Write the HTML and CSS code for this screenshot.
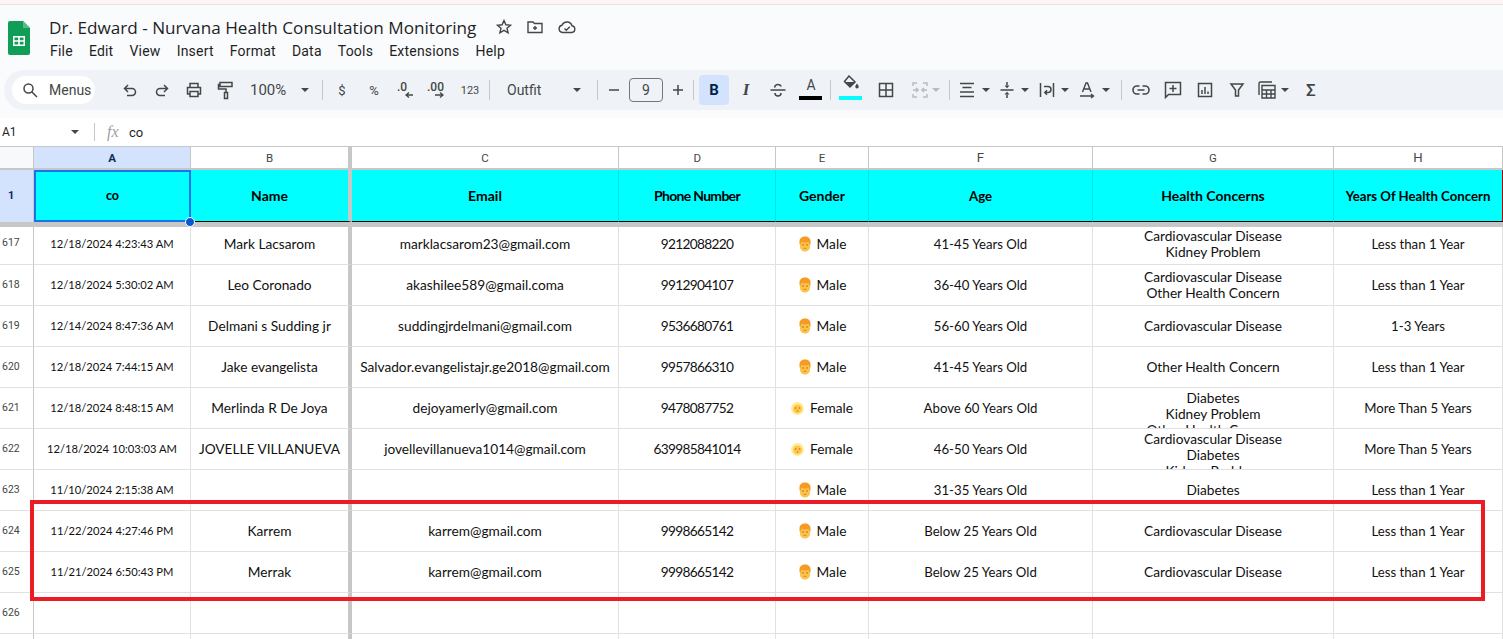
FILE: index.html
```html
<!DOCTYPE html>
<html lang="en">
<head>
  <meta charset="UTF-8" />
  <title>Dr. Edward - Nurvana Health Consultation Monitoring</title>
  <link rel="stylesheet" href="styles.css">
</head>
<body>

<svg class="sprite" width="0" height="0">
  <symbol id="male" viewBox="0 0 14 16">
    <path d="M2 6h10v5c0 2.500-2.500 4.500-5 4.500S2 13.500 2 11z" fill="#fdc34a"/>
    <path d="M1.500 8.500V5C1.500 2.500 4 .5 7 .5s5.500 2 5.500 4.500v3.500l-1.300-.3-.4-2.200c-2 .6-5.600.6-7.600 0l-.4 2.200z" fill="#f59a23"/>
    <circle cx="5" cy="9" r=".8" fill="#a8651f"/><circle cx="9" cy="9" r=".8" fill="#a8651f"/>
    <path d="M5.500 12.300h3" stroke="#d0801f" stroke-width=".9"/>
  </symbol>
  <symbol id="female" viewBox="0 0 14 14">
    <circle cx="7" cy="7" r="7" fill="#ffeb99"/>
    <circle cx="7" cy="7.500" r="4.800" fill="#fcc94a"/>
    <circle cx="5" cy="6.500" r="1" fill="#dc8a35"/><circle cx="9" cy="6.500" r="1" fill="#dc8a35"/>
    <circle cx="7" cy="9.500" r="1" fill="#dc8a35"/>
  </symbol>
</svg>

<!-- Title and menus -->
<header class="title-bar">
  <svg class="logo" width="22" height="34" viewBox="0 0 22 34">
    <path d="M2 0h13l7 7v25a2 2 0 0 1-2 2H2a2 2 0 0 1-2-2V2a2 2 0 0 1 2-2z" fill="#0f9d58"/>
    <path d="M15 0l7 7h-7z" fill="#57bb8a"/>
    <path d="M5 15h12v10H5zM6.500 16.500v2.700h3.700v-2.700zm5.300 0v2.700h3.700v-2.700zM6.500 20.700v2.800h3.700v-2.800zm5.300 0v2.800h3.700v-2.800z" fill="#fff" fill-rule="evenodd"/>
  </svg>
  <div class="title-text">
    <div class="doc-row">
      <span class="doc-name">Dr. Edward - Nurvana Health Consultation Monitoring</span>
      <svg class="doc-icon" width="18" height="18" viewBox="0 0 18 18" fill="none" stroke="#444746" stroke-width="1.400"><path d="M9 2.500l1.900 4.300 4.600.4-3.500 3 1.100 4.600L9 12.400l-4.100 2.400L6 10.200l-3.500-3 4.600-.4z"/></svg>
      <svg class="doc-icon" width="18" height="18" viewBox="0 0 18 18" fill="none" stroke="#444746" stroke-width="1.400"><path d="M2 4h5l1.500 1.500H16v9H2zM9 8v4M7 10h4"/></svg>
      <svg class="doc-icon" width="20" height="18" viewBox="0 0 20 18" fill="none" stroke="#444746" stroke-width="1.400"><path d="M5.500 14.500a3.700 3.700 0 0 1-.5-7.300 5.300 5.300 0 0 1 10 .6 3.400 3.400 0 0 1 0 6.700zM7.500 10.500l1.800 1.800 3.500-3.500"/></svg>
    </div>
    <nav class="menu-row">
      <span class="menu-item">File</span>
      <span class="menu-item">Edit</span>
      <span class="menu-item">View</span>
      <span class="menu-item">Insert</span>
      <span class="menu-item">Format</span>
      <span class="menu-item">Data</span>
      <span class="menu-item">Tools</span>
      <span class="menu-item">Extensions</span>
      <span class="menu-item">Help</span>
    </nav>
  </div>
</header>

<!-- Toolbar -->
<div class="toolbar">
  <div class="search-pill">
    <svg width="16" height="16" viewBox="0 0 16 16" fill="none" stroke="#444746" stroke-width="1.500"><circle cx="6.500" cy="6.500" r="4.500"/><path d="M10 10l5 5"/></svg>
    <span>Menus</span>
  </div>
  <div class="tool first-tool"><svg width="18" height="18" viewBox="0 0 18 18" fill="none" stroke="#444746" stroke-width="1.500"><path d="M7 4L3.500 7.500 7 11M3.500 7.500H11a3.500 3.500 0 0 1 0 7H6"/></svg></div>
  <div class="tool"><svg width="18" height="18" viewBox="0 0 18 18" fill="none" stroke="#444746" stroke-width="1.500"><path d="M11 4l3.500 3.500L11 11M14.500 7.500H7a3.500 3.500 0 0 0 0 7h5"/></svg></div>
  <div class="tool"><svg width="18" height="18" viewBox="0 0 18 18" fill="none" stroke="#444746" stroke-width="1.500"><path d="M5 6V2.500h8V6M5 13H2.500V6.500h13V13H13M5 10.500h8v5H5z"/></svg></div>
  <div class="tool"><svg width="18" height="20" viewBox="0 0 18 20" fill="none" stroke="#444746" stroke-width="1.500"><path d="M3 2.500h12v4H3zM3 4.500H1.500v4.500H9v3M7.500 12.500h3v6h-3z"/></svg></div>
  <div class="tool-zoom"><span>100%</span><i class="caret"></i></div>
  <i class="sep sep-zoom"></i>
  <div class="tool tool-text">$</div>
  <div class="tool tool-text">%</div>
  <div class="tool"><svg width="22" height="20" viewBox="0 0 22 20"><text x="2" y="11" class="dec-text">.0</text><path d="M18 15H11M14 12.500L11 15l3 2.500" fill="none" stroke="#444746" stroke-width="1.300"/></svg></div>
  <div class="tool"><svg width="24" height="20" viewBox="0 0 24 20"><text x="1" y="11" class="dec-text">.00</text><path d="M9 15h8M14 12.500l3 2.500-3 2.500" fill="none" stroke="#444746" stroke-width="1.300"/></svg></div>
  <div class="tool tool-small">123</div>
  <i class="sep sep-tight"></i>
  <div class="tool-font"><span>Outfit</span><i class="caret"></i></div>
  <i class="sep sep-font"></i>
  <div class="tool-step">
    <svg width="12" height="12" viewBox="0 0 12 12"><path d="M1 6h10" stroke="#444746" stroke-width="1.500"/></svg>
  </div>
  <div class="size-box">9</div>
  <div class="tool-step">
    <svg width="12" height="12" viewBox="0 0 12 12"><path d="M1 6h10M6 1v10" stroke="#444746" stroke-width="1.500"/></svg>
  </div>
  <i class="sep sep-tight"></i>
  <div class="tool-bold">B</div>
  <div class="tool tool-italic">I</div>
  <div class="tool"><svg width="18" height="18" viewBox="0 0 18 18" fill="none" stroke="#444746" stroke-width="1.500"><path d="M1.500 9h15M5.500 6.500C6 4 8 3.500 9 3.500s2.500.5 3.300 2M6 12c0 2 1.500 3 3 3s3-1 3-3"/></svg></div>
  <div class="tool tool-color">
    <span class="color-letter">A</span>
    <i class="color-bar color-black"></i>
  </div>
  <i class="sep sep-tight"></i>
  <div class="tool tool-color">
    <svg width="20" height="16" viewBox="0 0 20 16"><path d="M8 1l6 6-5 5-5.500-5.500z" fill="none" stroke="#444746" stroke-width="1.500"/><path d="M3.500 7h10.300L9 12z" fill="#444746"/><path d="M16 8.500c1 1.500 1.700 2.300 1.700 3.300a1.700 1.700 0 0 1-3.400 0c0-1 .7-1.800 1.700-3.300z" fill="#444746"/></svg>
    <i class="color-bar color-cyan"></i>
  </div>
  <div class="tool tool-gap"><svg width="16" height="16" viewBox="0 0 16 16" fill="none" stroke="#444746" stroke-width="1.500"><path d="M1.500 1.500h13v13h-13zM8 1.500v13M1.500 8h13"/></svg></div>
  <div class="tool-merge">
    <svg width="18" height="18" viewBox="0 0 18 18" fill="none" stroke="#b9bcbf" stroke-width="1.500"><path d="M6 2H2v3M12 2h4v3M6 16H2v-3M12 16h4v-3M2 9h5M16 9h-5M5 7l2 2-2 2M13 7l-2 2 2 2"/></svg>
    <i class="caret caret-off"></i>
  </div>
  <i class="sep sep-merge"></i>
  <div class="tool-drop">
    <svg width="18" height="16" viewBox="0 0 18 16" fill="none" stroke="#444746" stroke-width="1.500"><path d="M2 1.500h14M4.500 5.500h9M2 10h14M2 14.500h14"/></svg>
    <i class="caret"></i>
  </div>
  <div class="tool-drop">
    <svg width="16" height="18" viewBox="0 0 16 18" fill="none" stroke="#444746" stroke-width="1.500"><path d="M1.500 9h13"/><path d="M8 1v3.500M8 13.500V17" /><path d="M5.500 4.500h5L8 7.200zM5.500 13.500h5L8 10.800z" fill="#444746" stroke="none"/></svg>
    <i class="caret"></i>
  </div>
  <div class="tool-drop">
    <svg width="16" height="16" viewBox="0 0 16 16" fill="none" stroke="#444746" stroke-width="1.500"><path d="M1.500 1v14M14.500 1v14M5 4.500h4a3 3 0 0 1 0 6H6M8 8.300l-2.200 2.200 2.200 2.200"/></svg>
    <i class="caret"></i>
  </div>
  <div class="tool-drop">
    <svg width="18" height="18" viewBox="0 0 18 18" fill="none" stroke="#444746" stroke-width="1.400"><path d="M4.500 11L8 2h1.500l3.500 9M5.800 8h6M2 15h13M13 13l2.500 2-2.500 2"/></svg>
    <i class="caret"></i>
  </div>
  <i class="sep sep-rotate"></i>
  <div class="tool"><svg width="18" height="12" viewBox="0 0 18 12" fill="none" stroke="#444746" stroke-width="1.600"><path d="M7.500 2H5a4 4 0 0 0 0 8h2.500M10.500 2H13a4 4 0 0 1 0 8h-2.500M5.500 6h7"/></svg></div>
  <div class="tool"><svg width="18" height="18" viewBox="0 0 18 18" fill="none" stroke="#444746" stroke-width="1.500"><path d="M1.500 1.500h15v12h-12l-3 3zM9 4v7M5.500 7.500h7"/></svg></div>
  <div class="tool"><svg width="16" height="16" viewBox="0 0 16 16" fill="none" stroke="#444746" stroke-width="1.500"><path d="M1.500 1.500h13v13h-13zM5 8v4M8 5v7M11 9.500V12"/></svg></div>
  <div class="tool"><svg width="16" height="16" viewBox="0 0 16 16" fill="none" stroke="#444746" stroke-width="1.500"><path d="M2 2h12L9.500 8v6h-3V8z"/></svg></div>
  <div class="tool-func">
    <svg width="18" height="18" viewBox="0 0 18 18" fill="none" stroke="#444746" stroke-width="1.400"><path d="M1 14V2.500a1.500 1.500 0 0 1 1.500-1.500H14M4 4.500h13v12.500H4zM4 9h13M4 13h13M8.500 9v8M13 9v8" /></svg>
    <i class="caret"></i>
  </div>
  <div class="tool-sigma">Σ</div>
</div>

<!-- Formula bar -->
<div class="formula-bar">
  <div class="name-box"><span>A1</span><i class="caret"></i></div>
  <i class="formula-sep"></i>
  <span class="fx">fx</span>
  <span class="formula-value">co</span>
</div>

<!-- Sheet -->
<main class="sheet">
  <div class="row col-heads">
    <div class="cell corner"></div>
    <div class="cell head head-active">A</div>
    <div class="cell head frozen">B</div>
    <div class="cell head">C</div>
    <div class="cell head">D</div>
    <div class="cell head">E</div>
    <div class="cell head">F</div>
    <div class="cell head">G</div>
    <div class="cell head">H</div>
  </div>

  <div class="row row-header">
    <div class="cell num num-active">1</div>
    <div class="cell selected">co</div>
    <div class="cell frozen">Name</div>
    <div class="cell">Email</div>
    <div class="cell">Phone Number</div>
    <div class="cell">Gender</div>
    <div class="cell">Age</div>
    <div class="cell">Health Concerns</div>
    <div class="cell cell-last">Years Of Health Concern</div>
    <i class="fill-handle"></i>
  </div>

  <div class="row row-first">
    <div class="cell num">617</div>
    <div class="cell date">12/18/2024 4:23:43 AM</div>
    <div class="cell frozen">Mark Lacsarom</div>
    <div class="cell">marklacsarom23@gmail.com</div>
    <div class="cell">9212088220</div>
    <div class="cell"><svg class="face"><use href="#male"/></svg>Male</div>
    <div class="cell">41-45 Years Old</div>
    <div class="cell">Cardiovascular Disease<br>Kidney Problem</div>
    <div class="cell">Less than 1 Year</div>
  </div>
  <div class="row">
    <div class="cell num">618</div>
    <div class="cell date">12/18/2024 5:30:02 AM</div>
    <div class="cell frozen">Leo Coronado</div>
    <div class="cell">akashilee589@gmail.coma</div>
    <div class="cell">9912904107</div>
    <div class="cell"><svg class="face"><use href="#male"/></svg>Male</div>
    <div class="cell">36-40 Years Old</div>
    <div class="cell">Cardiovascular Disease<br>Other Health Concern</div>
    <div class="cell">Less than 1 Year</div>
  </div>
  <div class="row">
    <div class="cell num">619</div>
    <div class="cell date">12/14/2024 8:47:36 AM</div>
    <div class="cell frozen">Delmani s Sudding jr</div>
    <div class="cell">suddingjrdelmani@gmail.com</div>
    <div class="cell">9536680761</div>
    <div class="cell"><svg class="face"><use href="#male"/></svg>Male</div>
    <div class="cell">56-60 Years Old</div>
    <div class="cell">Cardiovascular Disease</div>
    <div class="cell">1-3 Years</div>
  </div>
  <div class="row">
    <div class="cell num">620</div>
    <div class="cell date">12/18/2024 7:44:15 AM</div>
    <div class="cell frozen">Jake evangelista</div>
    <div class="cell">Salvador.evangelistajr.ge2018@gmail.com</div>
    <div class="cell">9957866310</div>
    <div class="cell"><svg class="face"><use href="#male"/></svg>Male</div>
    <div class="cell">41-45 Years Old</div>
    <div class="cell">Other Health Concern</div>
    <div class="cell">Less than 1 Year</div>
  </div>
  <div class="row">
    <div class="cell num">621</div>
    <div class="cell date">12/18/2024 8:48:15 AM</div>
    <div class="cell frozen">Merlinda R De Joya</div>
    <div class="cell">dejoyamerly@gmail.com</div>
    <div class="cell">9478087752</div>
    <div class="cell"><svg class="face face-f"><use href="#female"/></svg>Female</div>
    <div class="cell">Above 60 Years Old</div>
    <div class="cell cell-clip">Diabetes<br>Kidney Problem<br>Other Health Concern</div>
    <div class="cell">More Than 5 Years</div>
  </div>
  <div class="row">
    <div class="cell num">622</div>
    <div class="cell date">12/18/2024 10:03:03 AM</div>
    <div class="cell frozen">JOVELLE VILLANUEVA</div>
    <div class="cell">jovellevillanueva1014@gmail.com</div>
    <div class="cell">639985841014</div>
    <div class="cell"><svg class="face face-f"><use href="#female"/></svg>Female</div>
    <div class="cell">46-50 Years Old</div>
    <div class="cell cell-clip">Cardiovascular Disease<br>Diabetes<br>Kidney Problem</div>
    <div class="cell">More Than 5 Years</div>
  </div>
  <div class="row">
    <div class="cell num">623</div>
    <div class="cell date">11/10/2024 2:15:38 AM</div>
    <div class="cell frozen"></div>
    <div class="cell"></div>
    <div class="cell"></div>
    <div class="cell"><svg class="face"><use href="#male"/></svg>Male</div>
    <div class="cell">31-35 Years Old</div>
    <div class="cell">Diabetes</div>
    <div class="cell">Less than 1 Year</div>
  </div>
  <div class="row">
    <div class="cell num">624</div>
    <div class="cell date">11/22/2024 4:27:46 PM</div>
    <div class="cell frozen">Karrem</div>
    <div class="cell">karrem@gmail.com</div>
    <div class="cell">9998665142</div>
    <div class="cell"><svg class="face"><use href="#male"/></svg>Male</div>
    <div class="cell">Below 25 Years Old</div>
    <div class="cell">Cardiovascular Disease</div>
    <div class="cell">Less than 1 Year</div>
  </div>
  <div class="row">
    <div class="cell num">625</div>
    <div class="cell date">11/21/2024 6:50:43 PM</div>
    <div class="cell frozen">Merrak</div>
    <div class="cell">karrem@gmail.com</div>
    <div class="cell">9998665142</div>
    <div class="cell"><svg class="face"><use href="#male"/></svg>Male</div>
    <div class="cell">Below 25 Years Old</div>
    <div class="cell">Cardiovascular Disease</div>
    <div class="cell">Less than 1 Year</div>
  </div>
  <div class="row">
    <div class="cell num">626</div>
    <div class="cell date"></div>
    <div class="cell frozen"></div>
    <div class="cell"></div>
    <div class="cell"></div>
    <div class="cell"></div>
    <div class="cell"></div>
    <div class="cell"></div>
    <div class="cell"></div>
  </div>
  <div class="row row-end">
    <div class="cell num"></div>
    <div class="cell date"></div>
    <div class="cell frozen"></div>
    <div class="cell"></div>
    <div class="cell"></div>
    <div class="cell"></div>
    <div class="cell"></div>
    <div class="cell"></div>
    <div class="cell"></div>
  </div>
</main>

<!-- Red highlight drawn over rows 624 and 625 -->
<div class="highlight"></div>

</body>
</html>
```

FILE: styles.css
```css
html, body {
  margin: 0;
  padding: 0;
  height: 639px;
  overflow: hidden;
}

body {
  position: relative;
  background: #f9fbfd;
  font-family: Roboto, "Liberation Sans", sans-serif;
  color: #1f1f1f;
}

.sprite {
  display: block;
}

/* Title and menus */
.title-bar {
  height: 69px;
  box-sizing: border-box;
  background: #f9fbfd;
  border-top: 4px solid #fdf5f3;
  box-shadow: inset 0 1px 0 #e6e6e6;
  padding: 14px 0 0 8px;
  display: flex;
}

.logo {
  margin-top: 3px;
}

.title-text {
  margin-left: 19px;
  margin-top: -3px;
}

.doc-row {
  display: flex;
  align-items: center;
  height: 24px;
}

.doc-name {
  font-family: "Open Sans", sans-serif;
  font-size: 17.150px;
  width: 428px;
  white-space: nowrap;
  margin-right: 18px;
}

.doc-icon {
  margin-right: 13px;
}

.menu-row {
  display: flex;
  gap: 16.100px;
  margin-top: 2px;
  font-size: 14px;
  letter-spacing: .2px;
  line-height: 20px;
  margin-left: 1px;
}

/* Toolbar */
.toolbar {
  height: 40px;
  margin: 1px 0 0 4px;
  background: #eff3f8;
  border-radius: 20px 0 0 20px;
  display: flex;
  align-items: center;
  padding-left: 8px;
  color: #444746;
}

.search-pill {
  width: 83px;
  height: 28px;
  box-sizing: border-box;
  background: #fff;
  border-radius: 14px;
  display: flex;
  align-items: center;
  gap: 11px;
  padding-left: 10px;
  font-size: 14px;
  flex: none;
}

.tool {
  width: 32px;
  height: 30px;
  flex: none;
  display: flex;
  align-items: center;
  justify-content: center;
}

.first-tool {
  margin-left: 19px;
}

.tool-zoom {
  width: 63px;
  margin-left: 8px;
  display: flex;
  align-items: center;
  justify-content: space-between;
  font-size: 15px;
  flex: none;
  padding-right: 4px;
  box-sizing: border-box;
}

.tool-text {
  font-size: 13px;
}

.tool-small {
  font-size: 11px;
}

.dec-text {
  font-size: 12px;
  font-weight: 500;
  fill: #444746;
}

.tool-font {
  width: 91px;
  box-sizing: border-box;
  margin-left: 4px;
  padding: 0 7px 0 10px;
  display: flex;
  align-items: center;
  justify-content: space-between;
  font-size: 14px;
  flex: none;
}

.tool-step {
  width: 24px;
  display: flex;
  justify-content: center;
  flex: none;
}

.size-box {
  width: 34px;
  height: 24px;
  box-sizing: border-box;
  border: 1px solid #747775;
  border-radius: 4px;
  display: flex;
  align-items: center;
  justify-content: center;
  font-size: 14px;
  margin: 0 3px;
  flex: none;
}

.tool-bold {
  width: 30px;
  height: 30px;
  background: #d3e3fd;
  border-radius: 4px;
  display: flex;
  align-items: center;
  justify-content: center;
  font: bold 15px "Roboto", sans-serif;
  color: #041e49;
  flex: none;
  margin-left: 2px;
}

.tool-italic {
  font: italic bold 17px "Liberation Serif", serif;
  margin-left: 1px;
}

.tool-color {
  flex-direction: column;
  justify-content: flex-start;
  height: 30px;
  position: relative;
  margin-left: 1px;
}

.color-letter {
  font-size: 14px;
  line-height: 20px;
  height: 20px;
}

.color-bar {
  display: block;
  width: 23px;
  height: 4px;
  position: absolute;
  bottom: 5px;
  left: 4px;
}

.color-black {
  background: #000;
}

.color-cyan {
  background: #00ffff;
}

.tool-gap {
  margin-left: 3px;
}

.tool-merge {
  width: 41px;
  display: flex;
  align-items: center;
  margin-left: 2px;
  gap: 3px;
  padding-left: 7px;
  box-sizing: border-box;
  flex: none;
}

.tool-drop {
  width: 40px;
  display: flex;
  align-items: center;
  justify-content: center;
  gap: 6px;
  flex: none;
}

.tool-func {
  width: 44px;
  display: flex;
  align-items: center;
  gap: 5px;
  padding-left: 4px;
  box-sizing: border-box;
  flex: none;
  margin-left: 1px;
}

.tool-sigma {
  font-size: 17px;
  font-weight: 500;
  margin-left: 8px;
}

.caret {
  display: inline-block;
  width: 0;
  height: 0;
  border-left: 4px solid transparent;
  border-right: 4px solid transparent;
  border-top: 4px solid #444746;
  flex: none;
}

.caret-off {
  border-top-color: #b9bcbf;
}

.sep {
  display: block;
  width: 1px;
  height: 20px;
  background: #c7c7c7;
  flex: none;
}

.sep-zoom {
  margin: 0 3px 0 9px;
}

.sep-tight {
  margin: 0 3px;
}

.sep-font {
  margin: 0 4px 0 9px;
}

.sep-merge {
  margin: 0 4px;
}

.sep-rotate {
  margin: 0 3px 0 7px;
}

/* Formula bar */
.formula-bar {
  margin-top: 8px;
  height: 28px;
  background: #fff;
  display: flex;
  align-items: center;
  font-size: 12px;
}

.name-box {
  width: 86px;
  box-sizing: border-box;
  padding: 0 7px 0 2px;
  display: flex;
  align-items: center;
  justify-content: space-between;
}

.formula-sep {
  display: block;
  width: 1px;
  height: 18px;
  margin-left: 8px;
  background: #c7c7c7;
}

.fx {
  font: italic 16px "Liberation Serif", serif;
  color: #9aa0a6;
  margin-left: 12px;
  width: 22px;
}

.formula-value {
  font-size: 13px;
}

/* Sheet */
.sheet {
  background: #fff;
  font-family: Lato, sans-serif;
  font-size: 13.700px;
  color: #111;
}

.row {
  display: grid;
  grid-template-columns: 34px 157px 161px 267px 157px 93px 224px 241px 169px;
  height: 41px;
  position: relative;
}

.cell {
  box-sizing: border-box;
  border-right: 1px solid #e1e1e1;
  border-bottom: 1px solid #e1e1e1;
  display: flex;
  align-items: center;
  justify-content: center;
  text-align: center;
  line-height: 16px;
  overflow: hidden;
  white-space: nowrap;
}

.row > .cell:nth-child(5) {
  letter-spacing: -.7px;
}

.row > .cell:nth-child(7),
.row > .cell:nth-child(9) {
  font-size: 13.200px;
}

.frozen {
  border-right: 4px solid #c7c7c7;
}

.col-heads {
  height: 24px;
}

.col-heads .cell {
  border-top: 1px solid #c7c7c7;
  border-bottom: 2px solid #c7c7c7;
  border-right-color: #c7c7c7;
  padding-top: 1px;
  font-family: Roboto, sans-serif;
  font-size: 11.500px;
  letter-spacing: 0;
  color: #444746;
}

.corner {
  background: #f8f9fa;
}

.col-heads .head-active {
  background: #d3e3fd;
  color: #0b2b60;
  font-weight: bold;
}

.num {
  font-family: Roboto, sans-serif;
  font-size: 10.500px;
  color: #444746;
  justify-content: flex-start;
  padding-left: 2px;
  border-right-color: #c7c7c7;
}

.row-header {
  height: 52px;
}

.row-header .cell {
  background: #00ffff;
  font-weight: bold;
  border-right-color: #00e4e4;
  border-bottom: 1px solid #000;
  color: #000;
  font-size: 14px;
  letter-spacing: 0;
}

.row-header .num-active {
  background: #d3e3fd;
  border-bottom: none;
  border-right-color: #c7c7c7;
  font-family: Roboto, sans-serif;
  font-size: 11px;
  padding-left: 8px;
  color: #0b2b60;
}

.row-header .frozen {
  border-right-color: #c7c7c7;
}

.row-header .selected {
  border: 2px solid #1a73e8;
  font-size: 12.500px;
}

.row-header .cell-last {
  border-right: 1px solid #b00;
}

.fill-handle {
  position: absolute;
  left: 185px;
  top: 47px;
  width: 8px;
  height: 8px;
  background: #0b57d0;
  border: 1px solid #fff;
  border-radius: 50%;
  z-index: 2;
}

.row-first {
  border-top: 5px solid #c7c7c7;
  height: 38px;
}

.row-first .cell {
  padding-bottom: 3px;
}

.row-first .num {
  padding-bottom: 5px;
}

.row-end {
  height: 5px;
}

.row-end .cell {
  border-bottom: none;
}

.date {
  font-size: 11.200px;
}

.cell-clip {
  align-items: flex-start;
  padding-top: 2px;
}

.face {
  width: 14px;
  height: 16px;
  margin-right: 5px;
  flex: none;
}

.face-f {
  width: 13px;
  height: 13px;
  margin-right: 6px;
}

/* Red highlight */
.highlight {
  position: absolute;
  left: 30px;
  top: 500px;
  width: 1455px;
  height: 101px;
  box-sizing: border-box;
  border: 4px solid #ec1c24;
}
```
